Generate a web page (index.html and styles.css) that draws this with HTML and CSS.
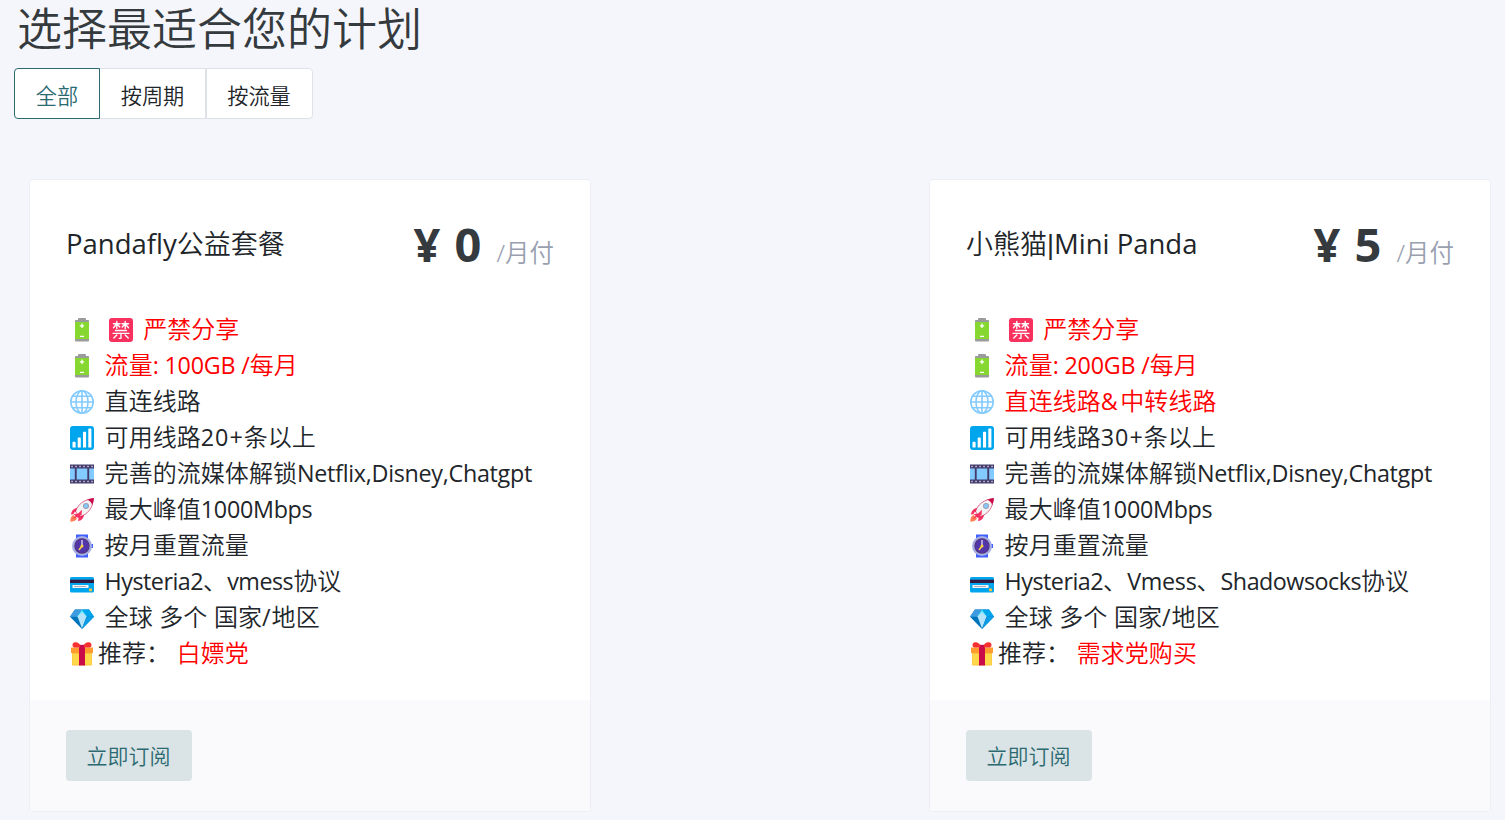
FILE: index.html
```html
<!DOCTYPE html>
<html lang="zh-CN">
<head>
<meta charset="utf-8">
<title>选择最适合您的计划</title>
<link rel="stylesheet" href="styles.css">
</head>
<body>
<svg class="sprite" aria-hidden="true">
  <symbol id="battery" viewBox="0 0 24 24"><path fill="#9b9b9b" d="M8 1.2C8 .5 8.5 0 9.200 0h5.600c.7 0 1.200.5 1.200 1.200V2h2c.6 0 1 .4 1 1v2H5V3c0-.6.4-1 1-1h2z"/><path fill="#86d72f" d="M5 4h14v17H5z"/><path fill="#9b9b9b" d="M5 21h14v1c0 1-.4 1.500-1.300 1.500H6.300C5.400 23.500 5 23 5 22z"/><path stroke="#fff" stroke-width="1.300" d="M12 5.500v4.500M9.800 7.800h4.400M10 18.300h4"/></symbol>
  <symbol id="forbid" viewBox="0 0 24 24"><rect width="24" height="24" rx="3" fill="#f8315f"/><g fill="none" stroke="#fff" stroke-width="1.350" stroke-linecap="round"><path d="M4.500 5.700h6.500M7.800 3.500v7M7.500 6.200l-3 3.500M8.100 6.200l2.700 2.800M13 5.700h6.500M16.200 3.500v7M15.900 6.200l-2.700 2.800M16.500 6.200l3 3.500M6.500 12.500h11M4 15.300h16M12 15.500v4.700l-1.700.2M7.800 17l-3 3M16.200 17l3 3"/></g></symbol>
  <symbol id="globe" viewBox="0 0 24 24"><g fill="none" stroke="#83cbff" stroke-width="1.600"><circle cx="12" cy="12" r="11.200"/><ellipse cx="12" cy="12" rx="6" ry="11.200"/><path d="M12 1v22M1 12h22M2.800 6.300h18.400M2.800 17.700h18.400"/></g></symbol>
  <symbol id="signal" viewBox="0 0 24 24"><rect width="24" height="24" rx="3" fill="#00a6ed"/><path fill="#fff" d="M2.500 16.500q0-.7.7-.7h1.700q.7 0 .7.700v5H2.500zM7.700 12.200q0-.7.7-.7h1.700q.7 0 .7.700v9.300H7.700zM13 6.500q0-.7.7-.7h1.700q.7 0 .7.700v15H13zM18.300 3.200q0-.7.7-.7h1.700q.7 0 .7.700v18.300h-3.100z"/></symbol>
  <symbol id="film" viewBox="0 0 24 24"><path fill="#433b6b" d="M0 2.500h24v19H0z"/><path fill="#83cbff" d="M0 6.500h4.800v11H0zM6.700 6.500h10.600v11H6.700zM19.200 6.500H24v11h-4.800z"/><path fill="none" stroke="#cbc4de" stroke-width="1.400" stroke-dasharray="1.500 2.500" d="M1.300 4.500H24M1.300 19.500H24"/></symbol>
  <symbol id="rocket" viewBox="0 0 24 24"><path fill="#ff8257" d="M3.500 17C1 17.800.3 20.500.3 23.700c3 0 5.700-.7 6.700-3.200z"/><path fill="#f92f60" d="M7 10c-4 .7-5.500 3.300-6 6.500l7-1zM14 17c-.7 4-2.700 5.500-6 6l1.500-7zM5 13.500l5.500 5-2.500 1.500L3.500 16z"/><path fill="#f4f4f4" stroke="#ca0b4a" stroke-width=".6" d="M5.500 14C7 7 14 1.200 23.300.6 23 10 17.500 16.500 10.200 18.500z"/><path fill="#ca0b4a" d="M17 1.800C19.200.9 21.500.3 24 0c-.3 2.500-.9 4.900-1.800 7-.6-2.200-2.500-4.400-5.200-5.200z"/><circle cx="16" cy="8" r="3" fill="#9b9bb0"/><circle cx="16" cy="8" r="2" fill="#83cbff"/><path fill="#f92f60" d="M12 11.800 2.500 21l9-4z"/></symbol>
  <symbol id="watch" viewBox="0 0 24 24"><path fill="#3f5fff" d="M6 .5h12v7H6zM6 16.500h12v7H6zM20 10h3v4h-3z"/><circle cx="12" cy="12" r="10" fill="#a6aee6"/><circle cx="12" cy="12" r="7.700" fill="#533566"/><circle cx="12" cy="12" r="7" fill="#5235a8"/><path stroke="#fff" stroke-width="1.100" d="M12 6v6"/><path stroke="#fcd53f" stroke-width="1.500" stroke-linecap="round" d="m12 12-2.700 3.500"/><circle cx="12" cy="12" r="1.500" fill="#fcd53f"/></symbol>
  <symbol id="creditcard" viewBox="0 0 24 24"><rect y="7" width="24" height="15.500" rx="1.500" fill="#00a6ed"/><path fill="#321b41" d="M0 9.700h24V13H0z"/><path fill="#f4f4f4" d="M2.500 15h16v3h-16z"/><path stroke="#9b9bb0" stroke-width=".8" d="M4 16.500h12"/><rect x="19" y="18.500" width="3" height="2.800" rx=".5" fill="#f9c23c"/></symbol>
  <symbol id="gem" viewBox="0 0 24 24"><path fill="#0074ba" d="M5 3.500h14l5 7.300L12 23 0 10.800z"/><path fill="#3f9be0" d="M5 3.500 0 10.800h7l5-7.300z"/><path fill="#00a6ed" d="M12 3.500h7l5 7.300h-7z"/><path fill="#50e2ff" d="m12 3.500 5 7.300H7z"/><path fill="#b5e3fb" d="M12 6 16.500 10.500 12 22.500 7.500 10.500z"/><path fill="#0b9de8" d="m16.800 10.800 7.200 0L12 23z"/></symbol>
  <symbol id="gift" viewBox="0 0 24 24"><path fill="#fcc33c" d="M2 8h20v14.500q0 1-1 1H3q-1 0-1-1z"/><path fill="#ffd84a" d="M2.500 12h19v10.500h-19z"/><path fill="#ff9b2f" d="M1 5.500h22V11H1z"/><path fill="#ca0b4a" d="M9 4h6v19.500H9z"/><path fill="#f8312f" d="M12 5.500C9.500.500 6.500-.5 4 .5 2 1.500 2 4.500 4 5.500zM12 5.500C14.500.500 17.500-.5 20 .5c2 1 2 4 0 5z"/><path fill="#ca0b4a" d="M10 2.800h4V6h-4z"/></symbol>
</svg>
<main class="page">
  <h1 class="heading">选择最适合您的计划</h1>
  <div class="tabs">
    <button class="tab tab-active">全部</button>
    <button class="tab">按周期</button>
    <button class="tab">按流量</button>
  </div>
  <div class="plans">
    <section class="card">
      <div class="card-body">
        <header class="card-head">
          <h2 class="plan-name"><span class="latin-name">Pandafly</span>公益套餐</h2>
          <div class="price"><b class="amount">¥ 0</b><span class="cycle">/月付</span></div>
        </header>
        <ul class="features">
          <li class="feature hot"><svg class="ico"><use href="#battery"/></svg><svg class="ico"><use href="#forbid"/></svg><span>严禁分享</span></li>
          <li class="feature hot"><svg class="ico"><use href="#battery"/></svg><span>流量<i class="lt mid">: 100GB /</i>每月</span></li>
          <li class="feature"><svg class="ico"><use href="#globe"/></svg><span>直连线路</span></li>
          <li class="feature"><svg class="ico"><use href="#signal"/></svg><span>可用线路<i class="lt wide">20+</i>条以上</span></li>
          <li class="feature"><svg class="ico"><use href="#film"/></svg><span>完善的流媒体解锁<i class="lt">Netflix,Disney,Chatgpt</i></span></li>
          <li class="feature"><svg class="ico"><use href="#rocket"/></svg><span>最大峰值<i class="lt">1000Mbps</i></span></li>
          <li class="feature"><svg class="ico"><use href="#watch"/></svg><span>按月重置流量</span></li>
          <li class="feature"><svg class="ico"><use href="#creditcard"/></svg><span><i class="lt snug">Hysteria2</i>、<i class="lt snug">vmess</i>协议</span></li>
          <li class="feature"><svg class="ico"><use href="#gem"/></svg><span>全球<i class="lt gap"> </i>多个<i class="lt gap"> </i>国家<i class="lt wide">/</i>地区</span></li>
          <li class="feature tight"><svg class="ico"><use href="#gift"/></svg><span>推荐：<i class="lt gap"> </i><em class="hot">白嫖党</em></span></li>
        </ul>
      </div>
      <footer class="card-foot"><button class="subscribe">立即订阅</button></footer>
    </section>
    <section class="card">
      <div class="card-body">
        <header class="card-head">
          <h2 class="plan-name">小熊猫<span class="bar">|</span><span class="latin-name">Mini Panda</span></h2>
          <div class="price"><b class="amount">¥ 5</b><span class="cycle">/月付</span></div>
        </header>
        <ul class="features">
          <li class="feature hot"><svg class="ico"><use href="#battery"/></svg><svg class="ico"><use href="#forbid"/></svg><span>严禁分享</span></li>
          <li class="feature hot"><svg class="ico"><use href="#battery"/></svg><span>流量<i class="lt mid">: 200GB /</i>每月</span></li>
          <li class="feature hot"><svg class="ico"><use href="#globe"/></svg><span>直连线路<i class="lt amp">&amp;</i>中转线路</span></li>
          <li class="feature"><svg class="ico"><use href="#signal"/></svg><span>可用线路<i class="lt wide">30+</i>条以上</span></li>
          <li class="feature"><svg class="ico"><use href="#film"/></svg><span>完善的流媒体解锁<i class="lt">Netflix,Disney,Chatgpt</i></span></li>
          <li class="feature"><svg class="ico"><use href="#rocket"/></svg><span>最大峰值<i class="lt">1000Mbps</i></span></li>
          <li class="feature"><svg class="ico"><use href="#watch"/></svg><span>按月重置流量</span></li>
          <li class="feature"><svg class="ico"><use href="#creditcard"/></svg><span><i class="lt snug">Hysteria2</i>、<i class="lt">Vmess</i>、<i class="lt snug">Shadowsocks</i>协议</span></li>
          <li class="feature"><svg class="ico"><use href="#gem"/></svg><span>全球<i class="lt gap"> </i>多个<i class="lt gap"> </i>国家<i class="lt wide">/</i>地区</span></li>
          <li class="feature tight"><svg class="ico"><use href="#gift"/></svg><span>推荐：<i class="lt gap"> </i><em class="hot">需求党购买</em></span></li>
        </ul>
      </div>
      <footer class="card-foot"><button class="subscribe">立即订阅</button></footer>
    </section>
  </div>
</main>
</body>
</html>
```
FILE: styles.css
```css
* { box-sizing: border-box; }
html, body { margin: 0; height: 820px; overflow: hidden; }
body {
  background: #f5f6fb;
  color: #212529;
  font-family: "Noto Sans", "Noto Sans CJK SC", sans-serif;
  font-weight: 350;
}
.sprite { display: none; }
.page { padding: 0 14px; }
.heading {
  margin: 0;
  padding: 1px 0 0 3px;
  height: 68px;
  font-size: 45px;
  font-weight: 350;
  line-height: 56px;
  color: #343a3d;
}
.tabs { display: flex; height: 51px; }
.tab {
  font: inherit;
  font-size: 21.2px;
  line-height: 1;
  padding: 4px 0 0;
  width: 107px;
  color: #212529;
  background: #fff;
  border: 1px solid #dfe1e8;
  margin-left: -1px;
}
.tab:last-child { width: 107px; padding-right: 1px; margin-left: 0; border-radius: 0 4px 4px 0; }
.tab-active {
  width: 86px;
  margin-left: 0;
  color: #2b6a71;
  border-color: #2b6a71;
  border-radius: 4px 0 0 4px;
  z-index: 1;
}
.plans {
  display: grid;
  grid-template-columns: 562px 562px;
  gap: 338px;
  padding: 60px 0 0 15px;
}
.card {
  background: #fff;
  border: 1px solid #edeff5;
  border-radius: 4px;
  overflow: hidden;
}
.card-body { height: 520px; padding: 30px 36px 0; }
.card-head {
  display: flex;
  justify-content: space-between;
  align-items: center;
  height: 70px;
}
.plan-name {
  margin: 0;
  padding-bottom: 5px;
  font-size: 27px;
  font-weight: 350;
  white-space: nowrap;
}
.bar { font-family: "Liberation Sans", sans-serif; }
.latin-name { font-family: "Open Sans", sans-serif; font-weight: 380; font-size: 27.500px; }
.price {
  display: flex;
  align-items: baseline;
  padding-bottom: 2px;
  white-space: nowrap;
}
.amount {
  font-size: 47px;
  font-weight: 700;
  line-height: 64px;
  word-spacing: 2px;
  color: #343a3d;
}
.cycle { margin-left: 15px; font-size: 24.500px; color: #98a0b0; }
.features { list-style: none; margin: 32px 0 0; padding: 0; }
.feature {
  display: flex;
  align-items: center;
  gap: 6.600px;
  height: 36px;
  font-size: 24px;
  line-height: 34px;
  white-space: nowrap;
}
.feature > span { letter-spacing: .05px; padding-bottom: 2px; }
.feature.tight { gap: 0; }
.hot { color: #f00; font-style: normal; }
.lt {
  font-family: "Open Sans", "Noto Sans", sans-serif;
  font-style: normal;
  font-weight: 380;
  font-size: 23.300px;
  letter-spacing: -.28px;
}
.lt.mid { letter-spacing: -.2px; }
.lt.wide { letter-spacing: 1px; }
.lt.amp { letter-spacing: 2.500px; }
.lt.gap { letter-spacing: .5px; }
.lt.snug { letter-spacing: -.5px; }
.ico { width: 24px; height: 24px; margin: 0 4px; flex: none; }
.card-foot {
  height: 111px;
  padding: 30px 36px;
  background: #fafafc;
}
.subscribe {
  width: 126px;
  height: 51px;
  padding: 2px 1px 0 0;
  border: 0;
  border-radius: 4px;
  font: inherit;
  font-size: 21px;
  line-height: 1;
  color: #2b6a71;
  background: #dae3e5;
}
```
